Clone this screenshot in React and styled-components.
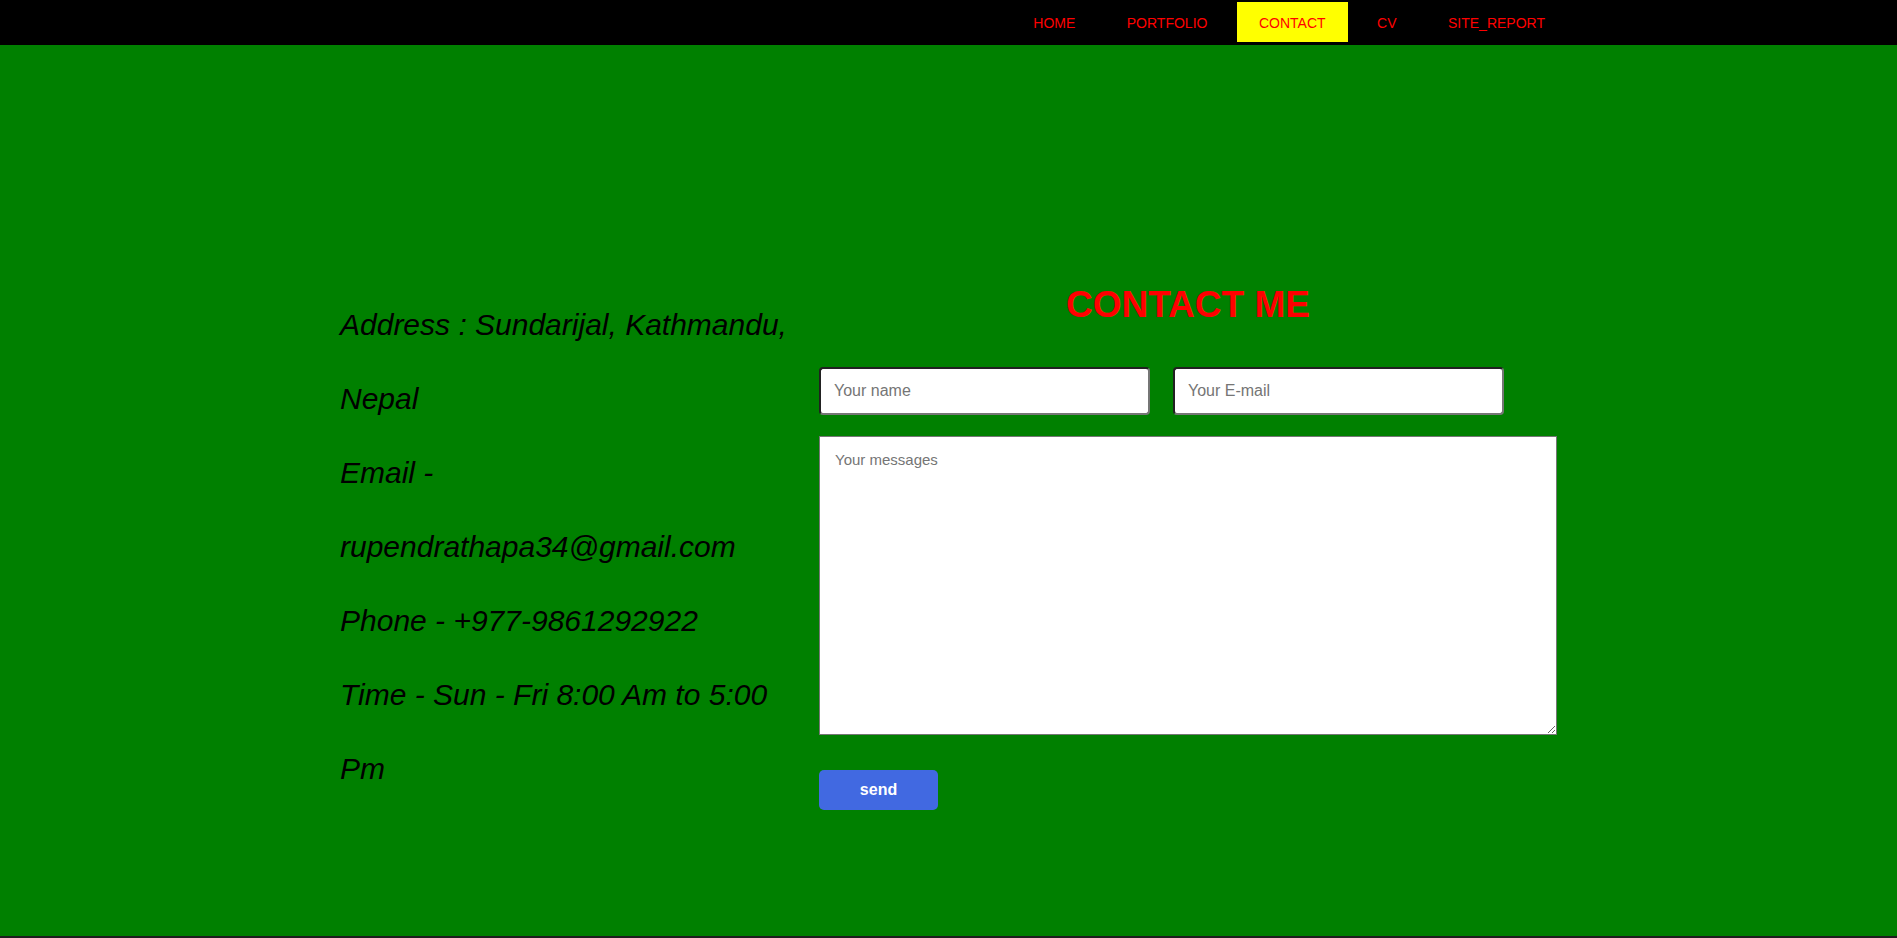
import React from "react";
import styled, { createGlobalStyle } from "styled-components";

const Global = createGlobalStyle`
  html, body { margin: 0; padding: 0; background: #1e1e1e; }
  body { font-family: "Liberation Sans", Arial, sans-serif; }
  * { box-sizing: border-box; }
`;

const Page = styled.div`
  height: 936px;
  background: #008000;
  display: flex;
  flex-direction: column;
`;

const Nav = styled.nav`
  height: 45px;
  background: #000;
  display: flex;
  justify-content: flex-end;
  padding-right: 330px;
`;

const Menu = styled.ul`
  list-style: none;
  margin: 2px 0 0;
  padding: 0;
  display: flex;
  gap: 7.5px;
  height: 40px;
`;

const MenuItem = styled.li`
  padding: 13px 22px 11px;
  font-size: 14px;
  line-height: 16px;
  color: #ff0000;
  background: ${(p) => (p.$active ? "#ffff00" : "transparent")};
  text-transform: uppercase;
  cursor: pointer;
`;

const Main = styled.main`
  flex: 1;
  display: flex;
  justify-content: center;
  align-items: flex-start;
  padding-top: 239px;
`;

const Row = styled.div`
  display: flex;
  align-items: center;
  gap: 20px;
  width: 1217px;
`;

const Info = styled.div`
  width: 459px;
  flex: 0 0 459px;
`;

const InfoLine = styled.p`
  margin: 0;
  font-size: 30px;
  line-height: 74px;
  font-style: italic;
  color: #000;
`;

const Form = styled.form`
  width: 738px;
  flex: 0 0 738px;
  display: flex;
  flex-direction: column;
`;

const Title = styled.h1`
  margin: 0 0 41px;
  text-align: center;
  color: #ff0000;
  font-size: 37px;
  font-weight: bold;
  line-height: normal;
`;

const InputRow = styled.div`
  display: flex;
  gap: 23px;
`;

const Input = styled.input`
  width: 331px;
  height: 48px;
  border: 2px inset #767676;
  border-radius: 4px;
  padding: 0 13px;
  font-family: "Liberation Sans", Arial, sans-serif;
  font-size: 16px;
  background: #fff;
  &::placeholder { color: #757575; }
`;

const Message = styled.textarea`
  margin-top: 21px;
  width: 738px;
  height: 299px;
  border: 1px solid #767676;
  padding: 14px 15px;
  font-family: "Liberation Sans", Arial, sans-serif;
  font-size: 15px;
  background: #fff;
  &::placeholder { color: #757575; }
`;

const SendButton = styled.button`
  margin-top: 35px;
  width: 119px;
  height: 40px;
  border: none;
  border-radius: 5px;
  background: #4169e1;
  color: #fff;
  font-family: "Liberation Sans", Arial, sans-serif;
  font-size: 16px;
  font-weight: bold;
  cursor: pointer;
`;

const navItems = ["home", "portfolio", "contact", "cv", "site_report"];

export default function App() {
  return (
    <>
      <Global />
      <Page>
        <Nav>
          <Menu>
            {navItems.map((n) => (
              <MenuItem key={n} $active={n === "contact"}>
                {n}
              </MenuItem>
            ))}
          </Menu>
        </Nav>
        <Main>
          <Row>
            <Info>
              <InfoLine>Address : Sundarijal, Kathmandu, Nepal</InfoLine>
              <InfoLine>Email - rupendrathapa34@gmail.com</InfoLine>
              <InfoLine>Phone - +977-9861292922</InfoLine>
              <InfoLine>Time - Sun - Fri 8:00 Am to 5:00 Pm</InfoLine>
            </Info>
            <Form onSubmit={(e) => e.preventDefault()}>
              <Title>CONTACT ME</Title>
              <InputRow>
                <Input type="text" placeholder="Your name" />
                <Input type="email" placeholder="Your E-mail" />
              </InputRow>
              <Message placeholder="Your messages" />
              <div>
                <SendButton type="submit">send</SendButton>
              </div>
            </Form>
          </Row>
        </Main>
      </Page>
    </>
  );
}
